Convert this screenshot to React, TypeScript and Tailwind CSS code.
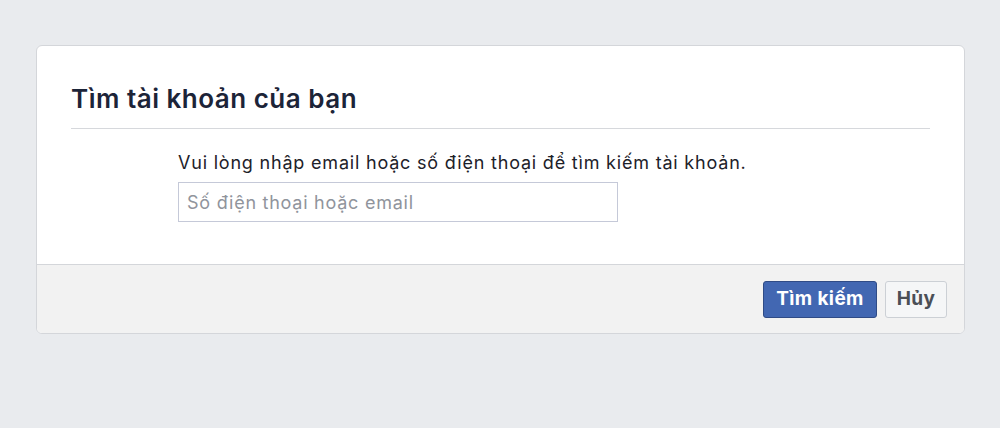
import React, { useState } from "react"

const font = { fontFamily: "Inter, 'Noto Sans', sans-serif" }

export default function App() {
  const [value, setValue] = useState("")
  return (
    <div className="min-h-[428px] w-full bg-[#e9ebee] pt-[45px] pl-[36px]" style={font}>
      <div className="w-[929px] overflow-hidden rounded-[6px] border border-[#d4d6da] bg-white">
        <div className="px-[34px] pt-[36px]">
          <h2 className="pb-[12px] text-[26px] font-semibold leading-[34px] tracking-[0.5px] text-[#1c2438]">
            Tìm tài khoản của bạn
          </h2>
          <div className="h-px bg-[#d6d8dc]" />
        </div>
        <div className="pl-[141px] pt-[23px] pb-[42px]">
          <p className="text-[18px] leading-[22px] tracking-[0.8px] text-[#1d2129]">
            Vui lòng nhập email hoặc số điện thoại để tìm kiếm tài khoản.
          </p>
          <input
            value={value}
            onChange={(e) => setValue(e.target.value)}
            placeholder="Số điện thoại hoặc email"
            className="mt-[8px] h-[40px] w-[440px] border border-[#c5c9d8] px-[8px] text-[18px] tracking-[0.75px] text-[#1d2129] outline-none placeholder:text-[#90949c]"
          />
        </div>
        <div className="flex h-[69px] items-center justify-end gap-[8px] border-t border-[#d4d6da] bg-[#f2f2f2] pr-[17px]">
          <button className="h-[37px] w-[114px] rounded-[3px] border border-[#2f4b86] bg-[#4267b2] text-[19px] font-bold tracking-[0.4px] text-white">
            Tìm kiếm
          </button>
          <button className="h-[37px] w-[62px] rounded-[3px] border border-[#ccd0d5] bg-[#f5f6f7] text-[19px] font-bold tracking-[0.4px] text-[#4b4f56]">
            Hủy
          </button>
        </div>
      </div>
    </div>
  )
}
